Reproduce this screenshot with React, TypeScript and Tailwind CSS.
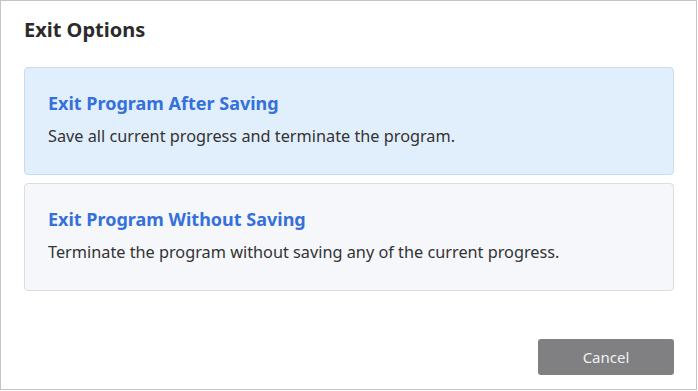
import React from 'react';

const options = [
  {
    title: 'Exit Program After Saving',
    desc: 'Save all current progress and terminate the program.',
    active: true,
  },
  {
    title: 'Exit Program Without Saving',
    desc: 'Terminate the program without saving any of the current progress.',
    active: false,
  },
];

const App = () => {
  return (
    <div className="w-[698px] h-[391px] bg-white font-['Noto_Sans',sans-serif]">
      <div className="w-[697px] h-[390px] border border-[#c4c4c4] flex flex-col pl-[23px] pr-[22px]">
        <h1 className="pt-[15px] text-[20px] leading-[28px] font-bold text-[#2b2b2b]">Exit Options</h1>

        <div className="mt-[23px] flex flex-col gap-[8px]">
          {options.map((o) => (
            <div
              key={o.title}
              className={`h-[108px] rounded-[4px] border px-[23px] pt-[22px] ${
                o.active ? 'bg-[#e1effd] border-[#c8dcee]' : 'bg-[#f6f7fb] border-[#dcdde2]'
              }`}
            >
              <div className="text-[18px] leading-[26px] font-bold text-[#3570db]">{o.title}</div>
              <div className="mt-[8px] text-[16.28px] leading-[24px] text-[#333333]">{o.desc}</div>
            </div>
          ))}
        </div>

        <div className="mt-auto mb-[14px] flex justify-end">
          <button className="w-[136px] h-[36px] rounded-[3px] bg-[#808083] text-[15px] text-[#f0f0f0]">
            Cancel
          </button>
        </div>
      </div>
    </div>
  );
};

export default App;
